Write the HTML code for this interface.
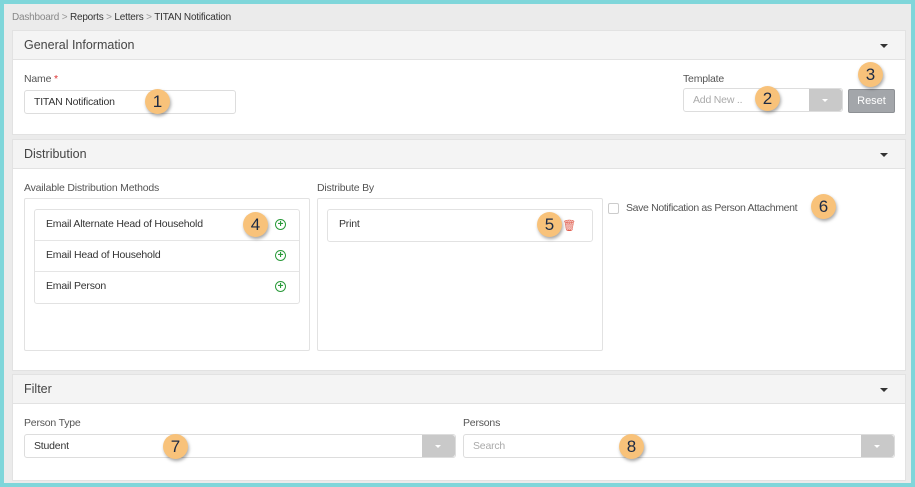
<!DOCTYPE html><html><head><style>
*{box-sizing:border-box}body{margin:0;width:915px;height:487px;background:#7fd6da;font-family:"Liberation Sans",sans-serif;font-size:11px;color:#333;position:relative;overflow:hidden}
.in{position:absolute;left:4px;top:4px;right:4px;bottom:4px;background:#ebebeb}
.a{position:absolute}
.panel{position:absolute;left:12px;width:894px;background:#fff;border:1px solid #e2e2e2}
.ph{height:29px;background:#f4f4f4;border-bottom:1px solid #e2e2e2;padding:7px 11px;font-size:12.5px;color:#444}
.car{position:absolute;right:17px;top:13px;border-left:4px solid transparent;border-right:4px solid transparent;border-top:4px solid #333}
.lbl{font-size:10.5px;color:#555;letter-spacing:-.2px}
.inp{border:1px solid #ddd;border-radius:3px;background:#fff;height:24px;padding:5px 9px;font-size:10.5px;letter-spacing:-.2px}
.b{position:absolute;width:25px;height:25px;border-radius:50%;background:#f8c27a;box-shadow:1px 2px 3px rgba(0,0,0,.35);color:#1c2a44;font-size:17px;text-align:center;line-height:25px}
.dd{position:absolute;right:0;top:0;width:33px;height:100%;background:#c9c9c9;border-radius:0 3px 3px 0}
.dd:after{content:"";position:absolute;left:13px;top:10px;border-left:3px solid transparent;border-right:3px solid transparent;border-top:3px solid #fff}
.item{height:31px;border-bottom:1px solid #e5e5e5;padding:8px 11px;font-size:10.5px;letter-spacing:-.2px;color:#333;position:relative}
.plus{position:absolute;right:13px;top:9px;width:11px;height:11px;border:1px solid #2a9a3a;border-radius:50%;color:#2a9a3a;font-size:10px;line-height:9px;text-align:center;font-weight:bold;letter-spacing:0}
</style></head><body><div class="in"></div>
<div class="a" style="left:12px;top:12px;font-size:10px;color:#888;letter-spacing:-.2px">Dashboard <span style="color:#999">&gt;</span> <span style="color:#333">Reports</span> <span style="color:#999">&gt;</span> <span style="color:#333">Letters</span> <span style="color:#999">&gt;</span> <span style="color:#333">TITAN Notification</span></div>

<div class="panel" style="top:30px;height:105px"><div class="ph">General Information</div><div class="car"></div>
<div class="a lbl" style="left:11px;top:42px">Name <span style="color:#d33">*</span></div>
<div class="a inp" style="left:11px;top:59px;width:212px">TITAN Notification</div>
<div class="a lbl" style="left:670px;top:42px">Template</div>
<div class="a inp" style="left:670px;top:57px;width:160px;color:#aaa">Add New ..<div class="dd"></div></div>
<div class="a" style="left:835px;top:58px;width:47px;height:24px;background:#a3a6aa;border:1px solid #8d9094;border-radius:2px;color:#fff;text-align:center;line-height:22px">Reset</div>
</div>

<div class="panel" style="top:139px;height:232px"><div class="ph">Distribution</div><div class="car"></div>
<div class="a lbl" style="left:11px;top:42px">Available Distribution Methods</div>
<div class="a" style="left:11px;top:58px;width:286px;height:153px;border:1px solid #e2e2e2;border-radius:2px">
<div class="a" style="left:9px;top:10px;width:266px;border:1px solid #e2e2e2;border-radius:3px">
<div class="item">Email Alternate Head of Household<span class="plus">+</span></div>
<div class="item">Email Head of Household<span class="plus">+</span></div>
<div class="item" style="border:0">Email Person<span class="plus">+</span></div></div></div>
<div class="a lbl" style="left:304px;top:42px">Distribute By</div>
<div class="a" style="left:304px;top:58px;width:286px;height:153px;border:1px solid #e2e2e2;border-radius:2px">
<div class="a" style="left:9px;top:10px;width:266px;border:1px solid #e2e2e2;border-radius:3px"><div class="item" style="border:0">Print<span class="a" style="right:16px;top:9px;color:#e05a4a;font-size:11px">🗑</span></div></div></div>
<div class="a" style="left:595px;top:63px;width:11px;height:11px;border:1px solid #ccc;border-radius:2px"></div>
<div class="a lbl" style="left:613px;top:62px;white-space:nowrap;letter-spacing:-.35px">Save Notification as Person Attachment</div>
</div>

<div class="panel" style="top:374px;height:107px"><div class="ph">Filter</div><div class="car"></div>
<div class="a lbl" style="left:11px;top:42px">Person Type</div>
<div class="a inp" style="left:11px;top:59px;width:432px">Student<div class="dd"></div></div>
<div class="a lbl" style="left:450px;top:42px">Persons</div>
<div class="a inp" style="left:450px;top:59px;width:432px;color:#aaa">Search<div class="dd"></div></div>
</div>

<div class="b" style="left:145px;top:89px">1</div>
<div class="b" style="left:755px;top:86px">2</div>
<div class="b" style="left:858px;top:62px">3</div>
<div class="b" style="left:243px;top:212px">4</div>
<div class="b" style="left:537px;top:212px">5</div>
<div class="b" style="left:811px;top:194px">6</div>
<div class="b" style="left:163px;top:434px">7</div>
<div class="b" style="left:619px;top:434px">8</div>
</body></html>
